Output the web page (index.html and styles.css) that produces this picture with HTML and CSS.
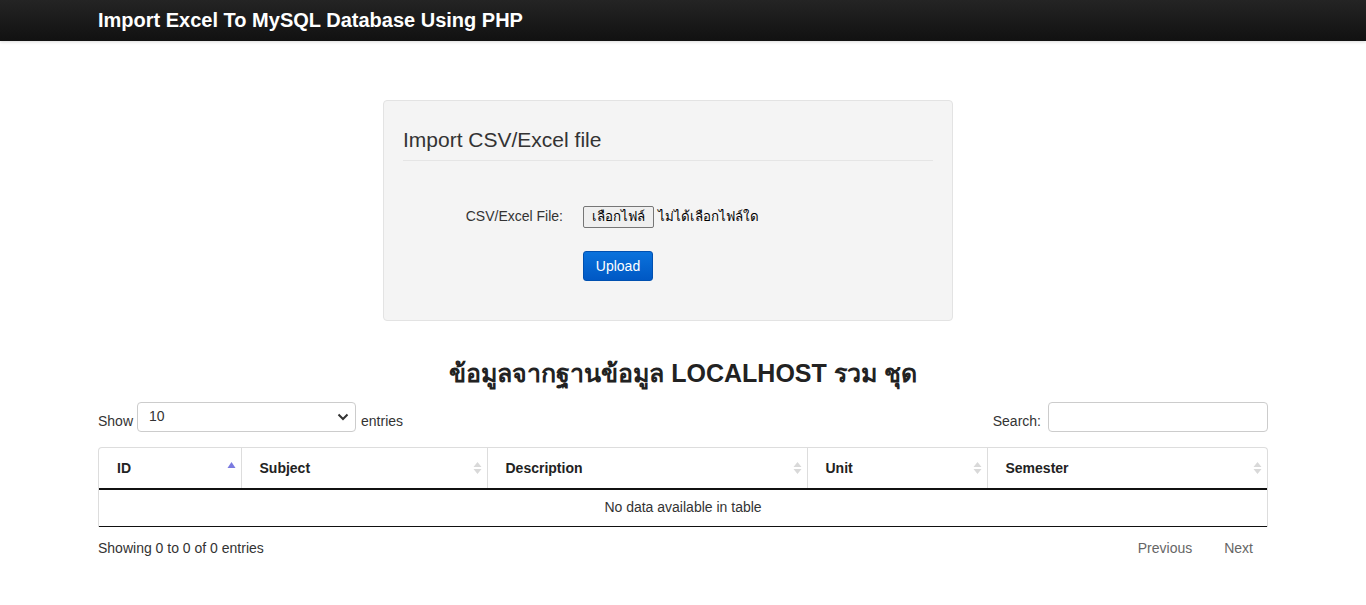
FILE: index.html
```html
<!DOCTYPE html>
<html lang="th">
<head>
<meta charset="utf-8">
<title>Import Excel To MySQL Database Using PHP</title>
<link rel="stylesheet" href="styles.css">
</head>
<body>
<nav class="navbar">
  <div class="container">
    <span class="brand">Import Excel To MySQL Database Using PHP</span>
  </div>
</nav>
<main class="container">
  <div class="well">
    <div class="legend">Import CSV/Excel file</div>
    <div class="form-row">
      <label class="form-label">CSV/Excel File:</label>
      <div class="file-input">
        <span class="file-btn">เลือกไฟล์</span>
        <span class="file-name">ไม่ได้เลือกไฟล์ใด</span>
      </div>
    </div>
    <div class="form-row submit-row">
      <span class="form-label"></span>
      <button class="btn-primary" type="button">Upload</button>
    </div>
  </div>

  <h3 class="data-title">ข้อมูลจากฐานข้อมูล LOCALHOST รวม ชุด</h3>

  <div class="dt-top">
    <div class="dt-length">
      <span class="dt-text">Show</span>
      <div class="select">
        <span>10</span>
        <svg width="12" height="8" viewBox="0 0 12 8"><path d="M1.5 1.5 L6 6 L10.5 1.5" fill="none" stroke="#333" stroke-width="2"/></svg>
      </div>
      <span class="dt-text">entries</span>
    </div>
    <div class="dt-search">
      <span class="dt-text">Search:</span>
      <div class="search-box"></div>
    </div>
  </div>

  <div class="table-wrap">
    <table class="dt-table">
      <thead>
        <tr>
          <th class="c-id">ID<span class="sort asc"><svg width="9" height="12" viewBox="0 0 9 12"><path d="M0.5 8 L4.5 2 L8.5 8 Z" fill="#7a7ae0"/></svg></span></th>
          <th class="c-subject">Subject<span class="sort"><svg width="9" height="14" viewBox="0 0 9 14"><path d="M0.5 6 L4.5 1 L8.5 6 Z M0.5 8 L4.5 13 L8.5 8 Z" fill="#d9d9d9"/></svg></span></th>
          <th class="c-desc">Description<span class="sort"><svg width="9" height="14" viewBox="0 0 9 14"><path d="M0.5 6 L4.5 1 L8.5 6 Z M0.5 8 L4.5 13 L8.5 8 Z" fill="#d9d9d9"/></svg></span></th>
          <th class="c-unit">Unit<span class="sort"><svg width="9" height="14" viewBox="0 0 9 14"><path d="M0.5 6 L4.5 1 L8.5 6 Z M0.5 8 L4.5 13 L8.5 8 Z" fill="#d9d9d9"/></svg></span></th>
          <th class="c-sem">Semester<span class="sort"><svg width="9" height="14" viewBox="0 0 9 14"><path d="M0.5 6 L4.5 1 L8.5 6 Z M0.5 8 L4.5 13 L8.5 8 Z" fill="#d9d9d9"/></svg></span></th>
        </tr>
      </thead>
      <tbody>
        <tr><td colspan="5" class="empty">No data available in table</td></tr>
      </tbody>
    </table>
  </div>

  <div class="dt-bottom">
    <div class="dt-info">Showing 0 to 0 of 0 entries</div>
    <div class="dt-paging">
      <span class="page-btn">Previous</span>
      <span class="page-btn">Next</span>
    </div>
  </div>
</main>
</body>
</html>
```

FILE: styles.css
```css
* { box-sizing: border-box; }
html, body { margin: 0; padding: 0; }
body {
  font-family: "Liberation Sans", Arial, Helvetica, sans-serif;
  font-size: 14px;
  line-height: 1.42857;
  color: #333;
  background: #fff;
}
.container { width: 1170px; margin: 0 auto; }

.navbar {
  height: 41px;
  background: linear-gradient(to bottom, #242424 0%, #111 100%);
  box-shadow: 0 1px 3px rgba(0,0,0,0.15);
}
.navbar .container { display: flex; align-items: center; height: 41px; }
.brand {
  color: #fff;
  font-size: 20px;
  font-weight: bold;
}

.well {
  width: 570px;
  margin: 59px 0 0 285px;
  background: #f4f4f4;
  border: 1px solid #e3e3e3;
  border-radius: 4px;
  padding: 9px 19px 39px;
}
.legend {
  font-size: 21px;
  line-height: 30px;
  color: #333;
  border-bottom: 1px solid #e5e5e5;
  margin-top: 10px;
  padding-top: 5px;
  padding-bottom: 5px;
}
.form-row { display: flex; align-items: center; gap: 20px; margin-top: 39px; height: 34px; }
.submit-row { margin-top: 17px; height: 30px; }
.form-label { width: 160px; text-align: right; font-size: 14px; color: #333; flex: none; }
.file-input { display: flex; align-items: center; gap: 4px; font-size: 13.33px; color: #000; }
.file-btn {
  display: inline-block;
  border: 1px solid #767676;
  border-radius: 2px;
  background: #efefef;
  padding: 0 8px;
  height: 22px;
  line-height: 20px;
}
.btn-primary {
  font-family: inherit;
  font-size: 14px;
  color: #fff;
  width: 70px;
  height: 30px;
  border: 1px solid #0050b0;
  border-radius: 3px;
  background: linear-gradient(to bottom, #0a72dc 0%, #0058c4 100%);
  padding: 0;
}

.data-title {
  text-align: center;
  font-size: 25px;
  font-weight: bold;
  margin: 36px 0 0;
  line-height: 32px;
  color: #222;
}

.dt-top {
  display: flex;
  justify-content: space-between;
  align-items: flex-end;
  margin-top: 13px;
  height: 30px;
}
.dt-length, .dt-search { display: flex; align-items: flex-end; }
.dt-text { line-height: 20px; margin-bottom: 1px; }
.select {
  width: 219px;
  height: 30px;
  margin: 0 5px 0 4px;
  border: 1px solid #ccc;
  border-radius: 4px;
  background: #fff;
  display: flex;
  justify-content: space-between;
  align-items: center;
  padding: 0 6px 0 11px;
  font-size: 14px;
}
.select span { margin-top: -1px; }
.search-box {
  width: 220px;
  height: 30px;
  margin-left: 7px;
  border: 1px solid #ccc;
  border-radius: 4px;
  background: #fff;
}

.table-wrap {
  margin-top: 15px;
  border: 1px solid #ddd;
  border-bottom: none;
  border-radius: 4px 4px 0 0;
  overflow: hidden;
}
.dt-table { width: 100%; border-collapse: collapse; }
.dt-table th {
  position: relative;
  text-align: left;
  font-weight: bold;
  font-size: 14px;
  height: 41px;
  padding: 1px 18px 0;
  border-left: 1px solid #ddd;
  border-bottom: 2px solid #111;
  color: #222;
}
.dt-table th:first-child { border-left: none; }
.c-id { width: 142px; }
.c-subject { width: 246px; }
.c-desc { width: 320px; }
.c-unit { width: 180px; }
.sort { position: absolute; right: 5px; top: 50%; transform: translateY(-50%); display: flex; }
.sort.asc { top: 45%; }
.sort svg { display: block; }
.dt-table td.empty {
  text-align: center;
  height: 37px;
  border-bottom: 1px solid #111;
  padding: 1px 0 0;
}

.dt-bottom {
  display: flex;
  justify-content: space-between;
  align-items: center;
  margin-top: 10px;
}
.dt-paging { display: flex; gap: 0; margin-right: 0; }
.page-btn { color: #666; padding: 2px 15px; margin-left: 2px; }
```
